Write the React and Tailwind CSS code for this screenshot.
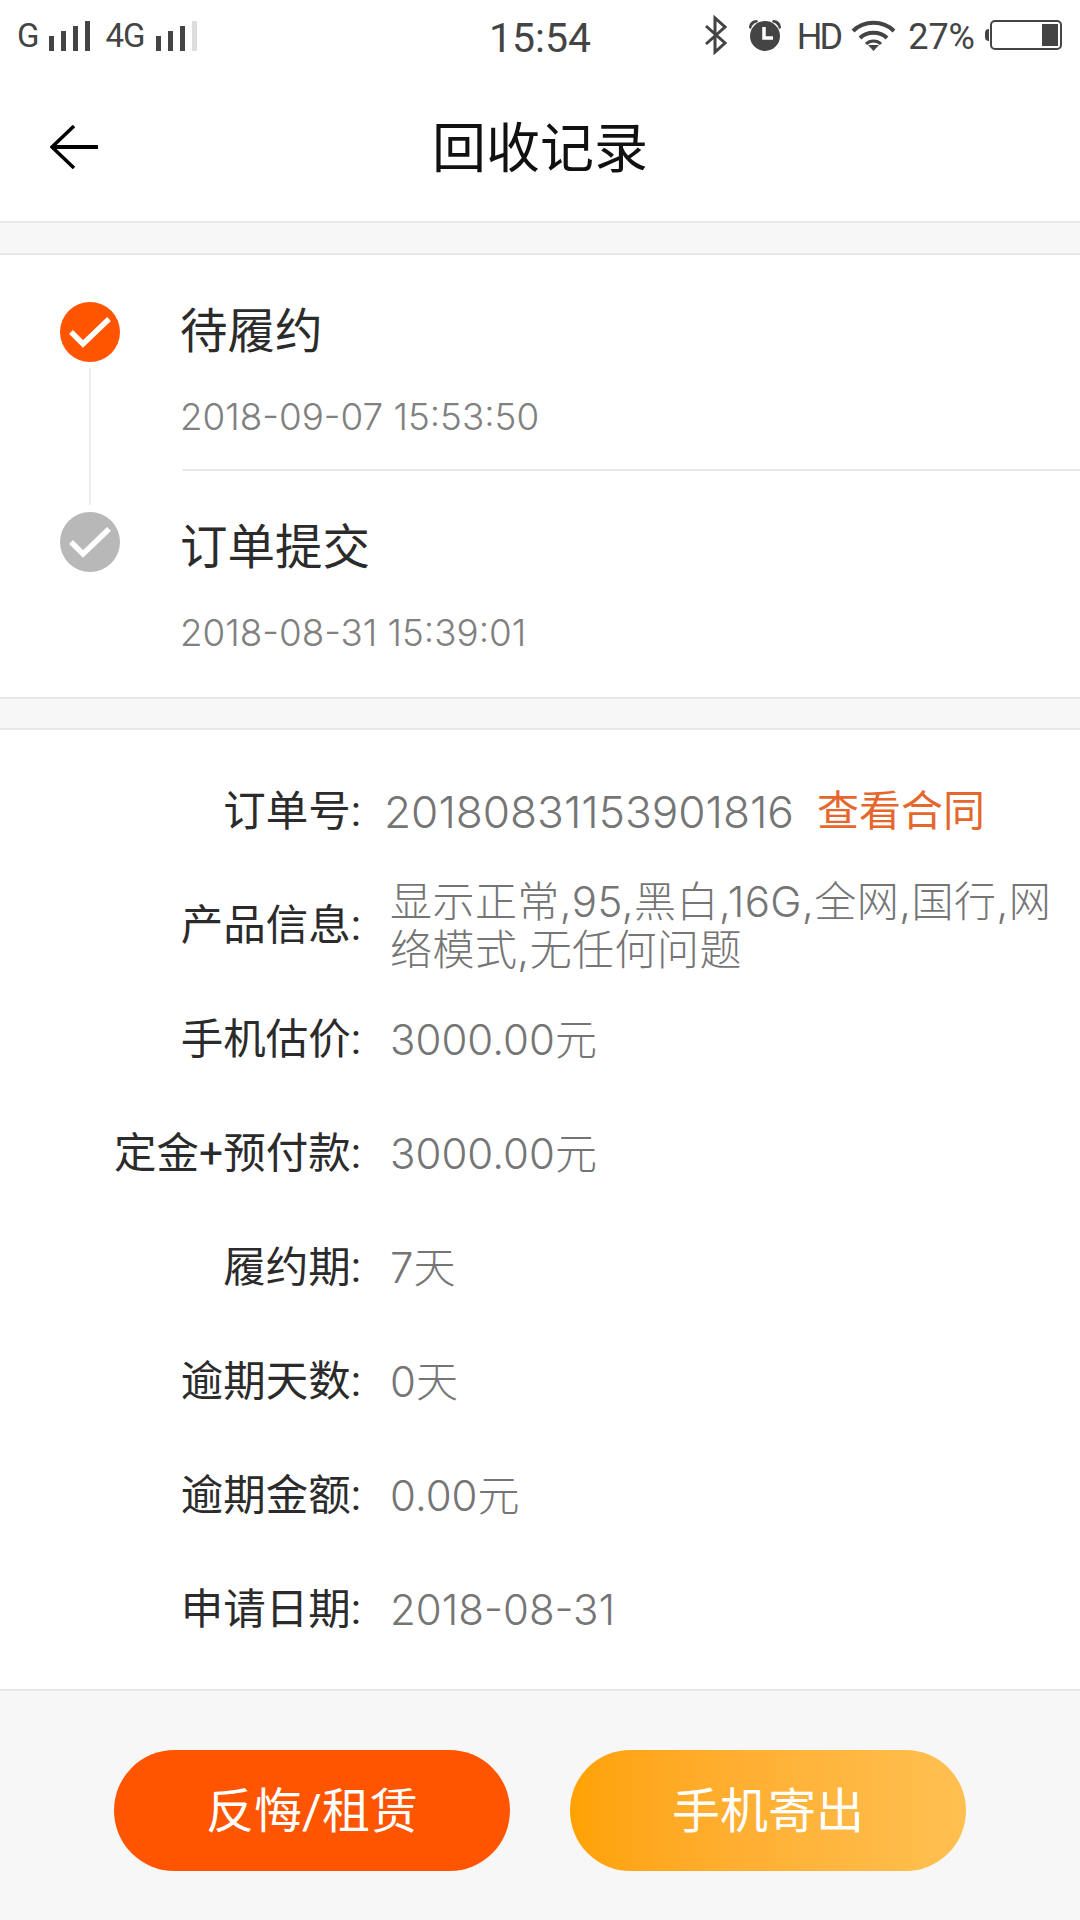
import React from "react";

const FONT = "font-['Roboto','Noto_Sans_CJK_SC',sans-serif]";
const NUM = "font-['Inter','Noto_Sans_CJK_SC',sans-serif] font-light";

function Bars({ last = "#444444", heights = [15, 20, 25, 30] }) {
  return (
    <svg width="41" height="30" viewBox="0 0 41 30">
      {heights.map((h, i) => (
        <rect key={i} x={i * 12} y={30 - h} width="5" height={h} fill={i === 3 ? last : "#444444"} />
      ))}
    </svg>
  );
}

function Bluetooth() {
  return (
    <svg width="22" height="40" viewBox="0 0 22 40" fill="none" stroke="#444444" strokeWidth="3">
      <path d="M1 11 L20 28 L10 37 L10 3 L20 12 L1 29" />
    </svg>
  );
}

function Alarm() {
  return (
    <svg width="34" height="32" viewBox="0 0 34 32">
      <path d="M1 9 C1 4 4 1 9 1 L10 3 C6 4 4 6 3 10 Z" fill="#444444" />
      <path d="M33 9 C33 4 30 1 25 1 L24 3 C28 4 30 6 31 10 Z" fill="#444444" />
      <circle cx="17" cy="17" r="15" fill="#444444" />
      <path d="M16 8 V19 H25" fill="none" stroke="#ffffff" strokeWidth="3.5" />
    </svg>
  );
}

function Wifi() {
  return (
    <svg width="45" height="31" viewBox="0 0 45 31" fill="none" stroke="#444444" strokeWidth="4">
      <path d="M2 11 C13 0 32 0 43 11" />
      <path d="M9 18 C16 11 29 11 36 18" />
      <path d="M15 24 C19 20 26 20 30 24" strokeWidth="3" />
      <path d="M17 25 L28 25 L22.5 31 Z" fill="#444444" stroke="none" />
    </svg>
  );
}

function Check({ bg }) {
  return (
    <div className={`w-[60px] h-[60px] rounded-full flex items-center justify-center shrink-0 ${bg}`}>
      <svg width="60" height="60" viewBox="0 0 60 60" fill="none" stroke="#ffffff" strokeWidth="5.5">
        <path d="M11 30 L23 42 L49 17" />
      </svg>
    </div>
  );
}

function Row({ label, children }) {
  return (
    <div className="h-[114px] flex items-center">
      <div className="w-[361px] text-right text-[42.5px] leading-[48px] text-[#2b2b2b] shrink-0">{label}</div>
      {children}
    </div>
  );
}

function Value({ children }) {
  return <div className={`ml-[29px] text-[42px] leading-[48px] text-[#757575] ${NUM}`}>{children}</div>;
}

export default function App() {
  return (
    <div className={`w-[1080px] h-[1920px] bg-[#f7f7f7] flex flex-col overflow-hidden ${FONT}`}>
      <div className="bg-white border-b-2 border-[#e8e8e8]">
        <div className="h-[70px] pl-[18px] pr-[18px] grid grid-cols-[1fr_auto_1fr] items-center text-[#444444]">
          <div className="flex items-center">
            <span className="text-[33px] leading-none -ml-[1px]">G</span>
            <span className="ml-[10px] mt-[2px] flex"><Bars /></span>
            <span className="ml-[15px] text-[33px] leading-none tracking-[-1px]">4G</span>
            <span className="ml-[11px] mt-[2px] flex"><Bars last="#dddddd" /></span>
          </div>
          <div className="text-[41px] leading-none mt-[6px]">15:54</div>
          <div className="flex items-center justify-end">
            <Bluetooth />
            <span className="ml-[21px] flex"><Alarm /></span>
            <span className="ml-[15px] mt-[4px] text-[36px] leading-none tracking-[-3px]">HD</span>
            <span className="ml-[11px] flex"><Wifi /></span>
            <span className="ml-[12px] mt-[4px] text-[36px] leading-none">27%</span>
            <span className="ml-[10px] flex items-center">
              <span className="w-[4px] h-[12px] bg-[#444444] rounded-l-full" />
              <span className="w-[72px] h-[30px] ml-[1px] border-2 border-[#444444] rounded-[5px] flex justify-end items-center pr-[2px]">
                <span className="w-[16px] h-[22px] bg-[#444444]" />
              </span>
            </span>
          </div>
        </div>
        <div className="h-[151px] relative flex items-center justify-center pt-[8px]">
          <svg className="absolute left-[50px] top-[55px]" width="48" height="44" viewBox="0 0 48 44" fill="none" stroke="#000000">
            <path d="M24 1 L2 22 L24 43" strokeWidth="3.5" />
            <path d="M2 22 H48" strokeWidth="4" />
          </svg>
          <h1 className="text-[54px] leading-none text-[#111111]">回收记录</h1>
        </div>
      </div>

      <div className="mt-[30px] bg-white border-y-2 border-[#e8e8e8] h-[446px] flex">
        <div className="w-[182px] shrink-0 pl-[60px] pt-[47px] flex flex-col">
          <Check bg="bg-[#ff5400]" />
          <div className="ml-[29px] mt-[6px] w-[2px] h-[137px] bg-[#eeeeee]" />
          <div className="mt-[7px]"><Check bg="bg-[#b8b8b8]" /></div>
        </div>
        <div className="flex-1 flex flex-col">
          <div className="h-[216px] border-b-2 border-[#e8e8e8] pt-[47px]">
            <div className="-ml-[2px] text-[47.5px] leading-[60px] text-[#2b2b2b]">待履约</div>
            <div className={`-ml-[2px] mt-[32px] text-[36.8px] leading-[46px] text-[#808080] ${NUM}`}>2018-09-07 15:53:50</div>
          </div>
          <div className="pt-[47px]">
            <div className="-ml-[2px] text-[47.5px] leading-[60px] text-[#2b2b2b]">订单提交</div>
            <div className={`-ml-[2px] mt-[32px] text-[36.8px] leading-[46px] text-[#808080] ${NUM}`}>2018-08-31 15:39:01</div>
          </div>
        </div>
      </div>

      <div className="mt-[29px] bg-white border-y-2 border-[#e8e8e8] h-[963px] pt-[25px]">
        <Row label="订单号:">
          <div className={`ml-[23px] text-[44.2px] leading-[48px] text-[#757575] ${NUM}`}>20180831153901816</div>
          <div className="ml-[23px] text-[42px] leading-[48px] text-[#e5672e]">查看合同</div>
        </Row>
        <Row label="产品信息:">
          <div className={`ml-[29px] w-[690px] text-[42px] tracking-[0.45px] leading-[48px] text-[#757575] ${NUM}`}>
            显示正常,95,黑白,16G,全网,国行,网<br />络模式,无任何问题
          </div>
        </Row>
        <Row label="手机估价:"><Value>3000.00元</Value></Row>
        <Row label="定金+预付款:"><Value>3000.00元</Value></Row>
        <Row label="履约期:"><Value>7天</Value></Row>
        <Row label="逾期天数:"><Value>0天</Value></Row>
        <Row label="逾期金额:"><Value>0.00元</Value></Row>
        <Row label="申请日期:"><Value>2018-08-31</Value></Row>
      </div>

      <div className="flex justify-center gap-[60px] pt-[59px]">
        <button className="w-[396px] h-[121px] rounded-full bg-[#ff5400] text-white text-[48px] leading-none pt-[3px]">反悔/租赁</button>
        <button className="w-[396px] h-[121px] rounded-full bg-gradient-to-r from-[#ffa200] to-[#ffc050] text-white text-[48px] leading-none pt-[3px]">手机寄出</button>
      </div>
    </div>
  );
}
